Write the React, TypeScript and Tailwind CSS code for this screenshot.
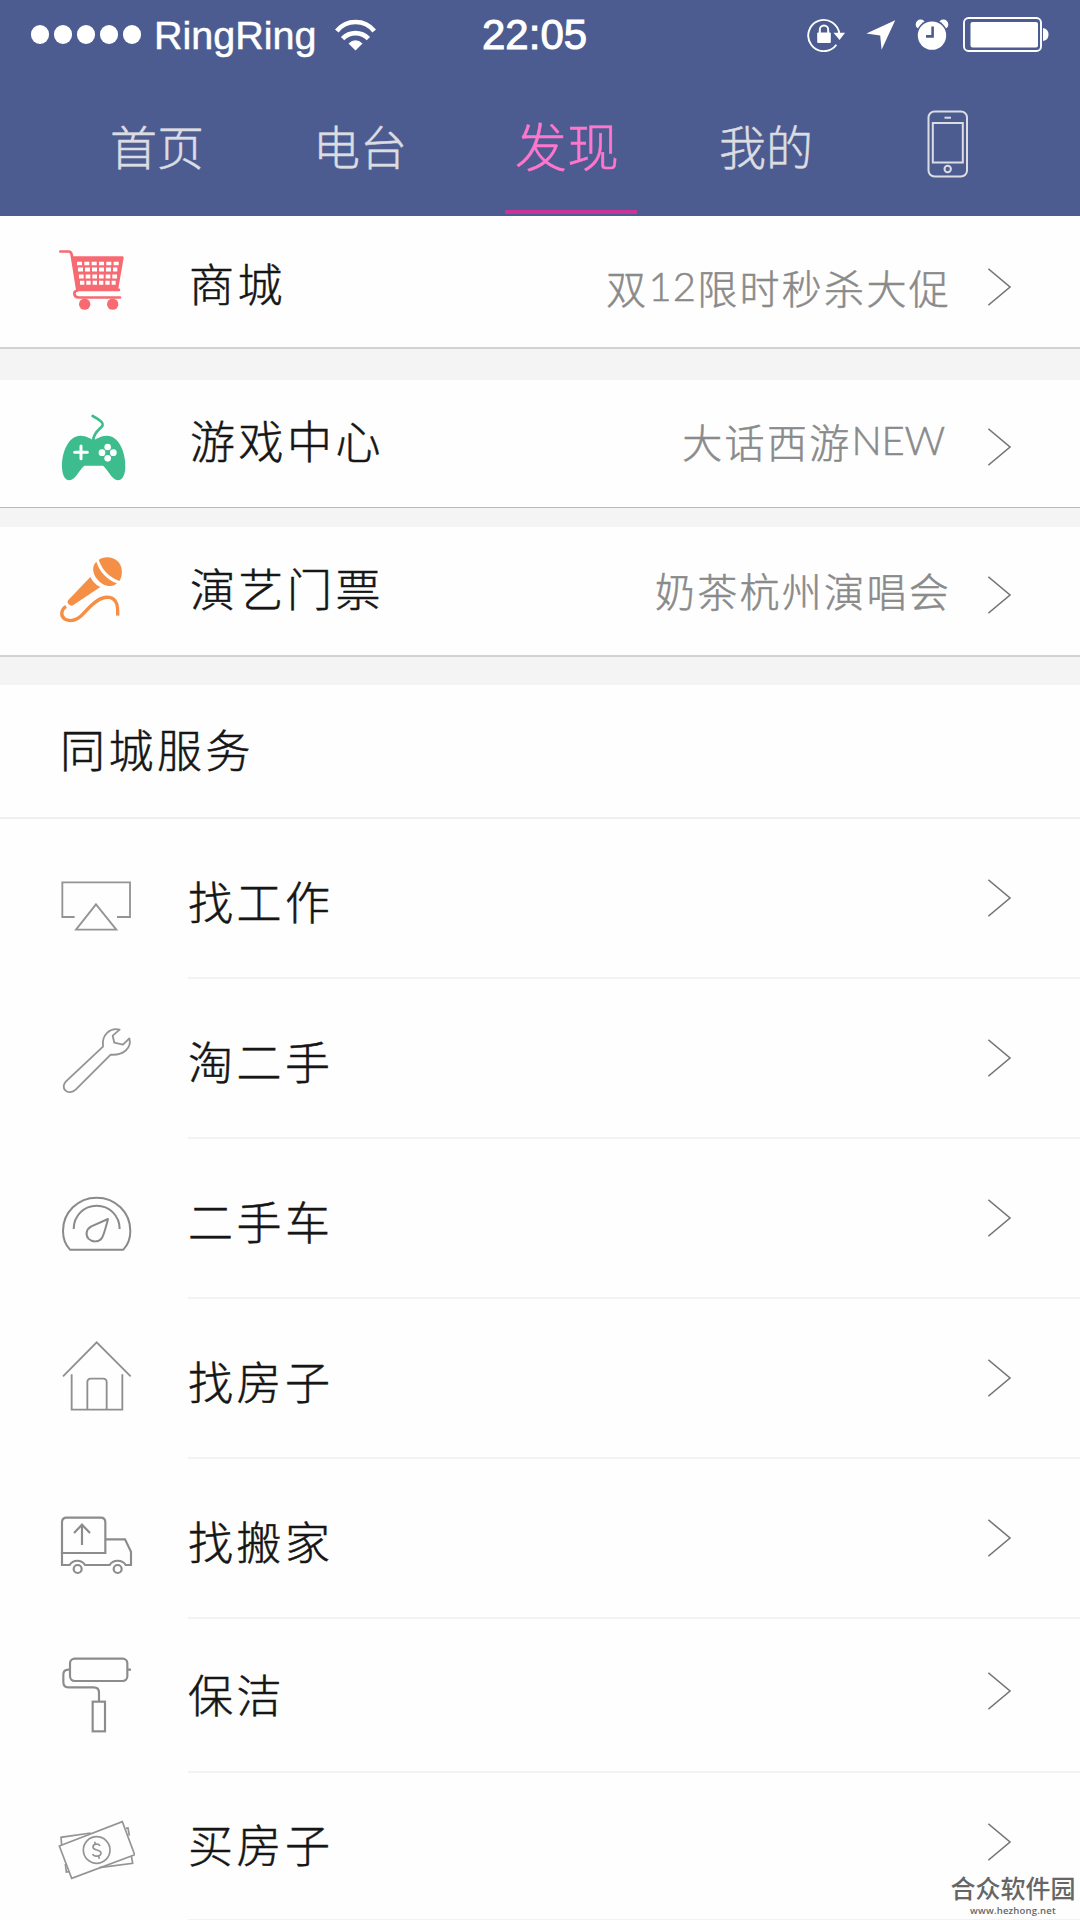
import React, { useState } from 'react'

const Wifi = () => (
  <svg className="ml-[19px]" width="41" height="32" viewBox="0 0 41 32" fill="none" stroke="#fff" strokeWidth="4.6">
    <path d="M1.8 12A24 24 0 0 1 39.2 12" />
    <path d="M7.6 19.6A18 18 0 0 1 33.4 19.6" />
    <path d="M13.5 24.6Q20.5 18 27.5 24.6L20.5 31.5Z" fill="#fff" stroke="none" />
  </svg>
)

const RotationLock = () => (
  <svg width="38" height="34" viewBox="0 0 38 34" fill="none" stroke="#fff" strokeWidth="1.9">
    <path d="M29.4 26.8A15.6 15.6 0 1 1 32.4 16.5" />
    <path d="M26.5 14.8H38L32.6 22Z" fill="#fff" stroke="none" />
    <rect x="10.2" y="14.4" width="13.6" height="10.6" rx="1" fill="#fff" stroke="none" />
    <path d="M12.8 15V11.8a4.2 4.2 0 0 1 8.4 0V15" strokeWidth="2" />
  </svg>
)

const Location = () => (
  <svg className="ml-[21px]" width="30" height="30" viewBox="0 0 30 30" fill="#fff">
    <path d="M29.2.3L15.6 29.8L14.2 15.6L.4 13.6Z" />
  </svg>
)

const Alarm = () => (
  <svg className="ml-[19px]" width="34" height="34" viewBox="0 0 34 34">
    <circle cx="5.6" cy="6.4" r="4.9" fill="#fff" />
    <circle cx="28.4" cy="6.4" r="4.9" fill="#fff" />
    <circle cx="17" cy="17.6" r="15.8" fill="#4d5c90" />
    <circle cx="17" cy="17.6" r="14.2" fill="#fff" />
    <path d="M17.6 8.6V18.4H11" fill="none" stroke="#4d5c90" strokeWidth="2.6" />
  </svg>
)

const Battery = () => (
  <svg className="ml-[14px]" width="86" height="35" viewBox="0 0 86 35">
    <rect x="1" y="1" width="77" height="33" rx="4.5" fill="none" stroke="#fff" strokeWidth="1.9" />
    <rect x="7.5" y="5" width="67.5" height="25.5" rx="2" fill="#fff" />
    <path d="M80 11Q85.5 12 85.5 17.5T80 24Z" fill="#fff" />
  </svg>
)

const Phone = () => (
  <svg width="42" height="68" viewBox="0 0 42 68" fill="none" stroke="#dcdde2" strokeWidth="2">
    <rect x="1.5" y="1.5" width="38.5" height="65" rx="6" />
    <rect x="5.8" y="13" width="30" height="39.5" />
    <path d="M17.5 7.7H24" />
    <circle cx="20.7" cy="59" r="3.2" />
  </svg>
)

const Chevron = () => (
  <svg width="24" height="38" viewBox="0 0 24 38" fill="none" stroke="#757575" strokeWidth="1.6">
    <path d="M.3.8L22 19L.3 37.2" />
  </svg>
)

const Cart = () => (
  <svg width="80" height="80" viewBox="165 94.5 240 240" fill="#f76a72">
    <path d="M181 123H206Q213 123 215 132L232 238H357" fill="none" stroke="#f76a72" strokeWidth="8" strokeLinecap="round" strokeLinejoin="round" />
    <path d="M214 137H367Q372 137 371 142L354 240H230Z" />
    <g fill="none" stroke="#fff">
      <path d="M231 159H356" strokeWidth="11" strokeDasharray="15 7" />
      <path d="M234 177H352" strokeWidth="12" strokeDasharray="15 6" />
      <path d="M237 198H351" strokeWidth="12" strokeDasharray="14 6" />
      <path d="M240 217H347" strokeWidth="12" strokeDasharray="13 6" />
    </g>
    <path d="M232 240Q222 243 223 250Q224 260 236 261H360" fill="none" stroke="#f76a72" strokeWidth="8" strokeLinecap="round" />
    <circle cx="254" cy="281" r="17" />
    <circle cx="338" cy="281" r="17" />
  </svg>
)

const Gamepad = () => (
  <svg width="80" height="80" viewBox="165 579 240 240" fill="#3dbc8d">
    <path d="M278 615Q312 633 308 643C305 651 278 664 280 690" fill="none" stroke="#3dbc8d" strokeWidth="8" strokeLinecap="round" />
    <path d="M281 686C272 686 266 675 242 674C208 673 184 720 186 772C188 796 196 808 208 808C226 807 238 776 253 764H309C324 776 336 807 354 808C366 808 374 796 376 772C378 720 354 673 320 674C296 675 290 686 281 686Z" />
    <path d="M224 724H262M243 705V743" stroke="#fff" strokeWidth="9" strokeLinecap="round" />
    <g fill="#fff">
      <circle cx="323" cy="708" r="10" />
      <circle cx="323" cy="742" r="10" />
      <circle cx="306" cy="725" r="10" />
      <circle cx="340" cy="725" r="10" />
    </g>
  </svg>
)

const Mic = () => (
  <svg width="80" height="80" viewBox="165 1023 240 240" fill="#f58f45">
    <path d="M296 1050C310 1038 340 1038 356 1057C368 1072 369 1098 358 1113C330 1102 309 1085 296 1050Z" />
    <path d="M289 1055C300 1088 322 1109 351 1120C343 1128 328 1131 312 1124C291 1114 274 1088 281 1067Q284 1060 289 1055Z" />
    <path d="M271 1101C277 1114 287 1125 301 1131L219 1186Q213 1190 206 1183Q200 1176 205 1170Z" />
    <path d="M198 1189C184 1198 180 1217 194 1227C213 1237 234 1230 253 1208C281 1176 303 1159 327 1162C352 1166 354 1189 353 1217" fill="none" stroke="#f58f45" strokeWidth="10" />
  </svg>
)

const AirPlay = () => (
  <svg width="80" height="80" viewBox="165 474 240 240" fill="none" stroke="#949494" strokeWidth="5.5">
    <path d="M224 651H187V547H390V651H351" />
    <path d="M288 613L349 689H228Z" />
  </svg>
)

const Wrench = () => (
  <svg width="80" height="80" viewBox="165 954 240 240" fill="none" stroke="#949494" strokeWidth="5.5" strokeLinejoin="round">
    <path d="M359 989C332 982 304 1003 309 1040L198 1144C190 1153 189 1163 196 1171C204 1179 217 1178 227 1169L332 1064C370 1067 396 1044 388 1015L369 1034L343 1028L338 1007Z" />
  </svg>
)

const Gauge = () => (
  <svg width="80" height="80" viewBox="165 174 240 240" fill="none" stroke="#8a8a8a" strokeWidth="6" strokeLinejoin="round">
    <path d="M210 389C195 373 189 353 189 333C189 277 234 233 290 233C346 233 391 277 391 333C391 353 385 373 370 389Z" />
    <path d="M221 327C221 287 252 257 290 257C328 257 359 287 359 327" />
    <path d="M324 297L274 319C258 328 256 345 265 356C276 367 296 367 305 355C311 347 314 334 324 297Z" />
  </svg>
)

const House = () => (
  <svg width="80" height="80" viewBox="165 654 240 240" fill="none" stroke="#8f8f8f" strokeWidth="5.5">
    <path d="M189 769L290 667L392 769" />
    <path d="M215 763V869H367V763" />
    <path d="M262 869V787Q262 776 273 776H309Q320 776 320 787V869" />
  </svg>
)

const Truck = () => (
  <svg width="80" height="80" viewBox="165 54 240 240" fill="none" stroke="#8c8c8c" strokeWidth="6.5">
    <path d="M186 219V127Q186 113 200 113H302Q316 113 316 127V219Z" />
    <path d="M186 216V255H209C219 238 245 238 255 255H329C339 238 367 238 377 255H393V215L375 178H316" />
    <path d="M246 195V134M222 159L246 134L270 159" />
    <circle cx="233" cy="267" r="12" />
    <circle cx="353" cy="267" r="12" />
  </svg>
)

const Roller = () => (
  <svg width="80" height="80" viewBox="165 525 240 240" fill="none" stroke="#8c8c8c" strokeWidth="6.5">
    <rect x="210" y="536" width="172" height="67" rx="14" />
    <path d="M382 569H393M210 569H205Q190 569 190 584V606Q190 622 205 622H281Q297 622 297 638V664" />
    <rect x="278" y="665" width="37" height="89" />
  </svg>
)

const Cash = () => (
  <svg width="80" height="80" viewBox="165 978 240 240" fill="none" stroke="#949494" strokeWidth="5">
    <path d="M185 1095L183 1072L272 1059M378 1045L384 1044L388 1067M394 1128L398 1150L298 1163M196 1152L199 1176L207 1175" />
    <path d="M178 1098L367 1025L404 1124L215 1195Z" />
    <circle cx="290" cy="1110" r="40" />
    <path d="M300 1098C296 1089 278 1091 279 1102C280 1113 303 1107 303 1119C303 1130 282 1132 278 1122M286 1092L284 1085M296 1129L298 1136" />
  </svg>
)

const tabs = [
  { label: '首页', width: 'w-[168px]' },
  { label: '电台', width: 'w-[238px]' },
  { label: '发现', width: 'w-[184px]' },
  { label: '我的', width: 'w-[206px]' },
]

// latin runs sit a little above the chinese baseline
const Latin = ({ className, children }: any) => <span className={`align-[3px] leading-none ${className}`}>{children}</span>

const features = [
  { label: '商城', note: <>双<Latin className="tracking-[1.2px]">12</Latin>限时秒杀大促</>, Icon: Cart, row: 'h-[133px] border-b-2 border-[#d2d2d2]', text: 'ml-[54px] pt-2', noteCls: 'pt-3 mr-[37px]', chev: 'pt-[11px]', gap: 'h-[31px]' },
  { label: '游戏中心', note: <>大话西游<Latin className="tracking-[-0.2px]">NEW</Latin></>, Icon: Gamepad, row: 'h-[128px] border-b border-[#b9b9b9]', text: 'ml-[55px] pb-[3px]', noteCls: 'pb-1 mr-[43px]', chev: 'pt-[7px]', gap: 'h-[19px]' },
  { label: '演艺门票', note: '奶茶杭州演唱会', Icon: Mic, row: 'h-[130px] border-b-2 border-[#d2d2d2]', text: 'ml-[55px] pb-0.5', noteCls: 'pt-0.5 mr-[37px]', chev: 'pt-[7px]', gap: 'h-7' },
]

const services = [
  { label: '找工作', Icon: AirPlay, row: 'h-40', text: 'pt-2.5', chev: '' },
  { label: '淘二手', Icon: Wrench, row: 'h-40', text: 'pt-2.5', chev: '' },
  { label: '二手车', Icon: Gauge, row: 'h-40', text: 'pt-2.5', chev: '' },
  { label: '找房子', Icon: House, row: 'h-40', text: 'pt-2.5', chev: '' },
  { label: '找搬家', Icon: Truck, row: 'h-40', text: 'pt-2.5', chev: '' },
  { label: '保洁', Icon: Roller, row: 'h-[154px]', text: 'pt-0.5', chev: 'pb-2' },
  { label: '买房子', Icon: Cash, row: 'h-[148px]', text: 'pt-px', chev: 'pb-2' },
]

const StatusBar = () => (
  <div className="flex h-[69px] items-center pl-[31px] font-['Liberation_Sans',sans-serif] text-white">
    <div className="flex w-[451px] items-center">
      <div className="flex gap-[5px]">
        {[0, 1, 2, 3, 4].map(i => <span key={i} className="h-[19px] w-[18px] rounded-full bg-white" />)}
      </div>
      <span className="ml-[13px] pt-0.5 text-[39.5px] leading-none [-webkit-text-stroke:0.5px_white]">RingRing</span>
      <Wifi />
    </div>
    <span className="w-[325px] text-[42px] leading-none [-webkit-text-stroke:1px_white]">22:05</span>
    <RotationLock />
    <Location />
    <Alarm />
    <Battery />
  </div>
)

export default function App() {
  const [active, setActive] = useState('发现')
  return (
    <div className="relative h-[1920px] w-[1080px] overflow-hidden bg-[#fefefe] font-['Lato','Noto_Sans_CJK_SC',sans-serif] font-light text-[#161616] [-webkit-text-stroke:0.5px_currentColor]">
      <header className="h-[216px] bg-[#4d5c90]">
        <StatusBar />
        <nav className="flex h-[145px] pl-[73px] text-[#dcdde2]">
          {tabs.map(tab => (
            <button
              key={tab.label}
              onClick={() => setActive(tab.label)}
              className={`${tab.width} flex flex-col items-center`}
            >
              <span className={`flex flex-1 items-center whitespace-nowrap ${tab.label === active ? 'pt-[15px] pr-2 text-[52px] text-[#ff77cc]' : 'pt-4 text-[47px]'}`}>{tab.label}</span>
              <span className={`h-1 w-[132px] ${tab.label === active ? 'bg-[#cb3399]' : ''}`} />
            </button>
          ))}
          <div className="ml-[58px] pt-[41px]"><Phone /></div>
        </nav>
      </header>

      {features.map(({ label, note, Icon, row, text, noteCls, chev, gap }) => (
        <React.Fragment key={label}>
          <div className={`flex items-center pl-[55px] pr-[68px] ${row}`}>
            <Icon />
            <span className={`flex-1 text-[45px] leading-none tracking-[3.5px] ${text}`}>{label}</span>
            <span className={`text-[40px] leading-none tracking-[2.3px] text-[#8a8a8a] ${noteCls}`}>{note}</span>
            <div className={chev}><Chevron /></div>
          </div>
          <div className={`bg-[#f4f4f4] ${gap}`} />
        </React.Fragment>
      ))}

      <h2 className="flex h-[134px] items-center border-b-2 border-[#f0f0f0] pl-[60px] pt-px text-[45px] leading-none tracking-[3.5px]">同城服务</h2>

      {services.map(({ label, Icon, row, text, chev }) => (
        <div key={label} className={`flex pl-[55px] ${row}`}>
          <div className="flex w-[133px] items-center pb-0.5"><Icon /></div>
          <div className="flex flex-1 items-center border-b-2 border-[#f3f3f3] pr-[68px]">
            <span className={`flex-1 text-[45px] leading-none tracking-[3.5px] ${text}`}>{label}</span>
            <div className={chev}><Chevron /></div>
          </div>
        </div>
      ))}

      <div className="absolute right-1 bottom-[3px] flex w-[126px] flex-col items-center gap-[3px] font-['Open_Sans','Noto_Sans_CJK_SC',sans-serif] text-[#666] [-webkit-text-stroke:0]">
        <span className="text-[25px] leading-[25px] font-medium whitespace-nowrap">合众软件园</span>
        <span className="text-[9.5px] leading-[13px] font-semibold tracking-[0.2px]">www.hezhong.net</span>
      </div>
    </div>
  )
}
